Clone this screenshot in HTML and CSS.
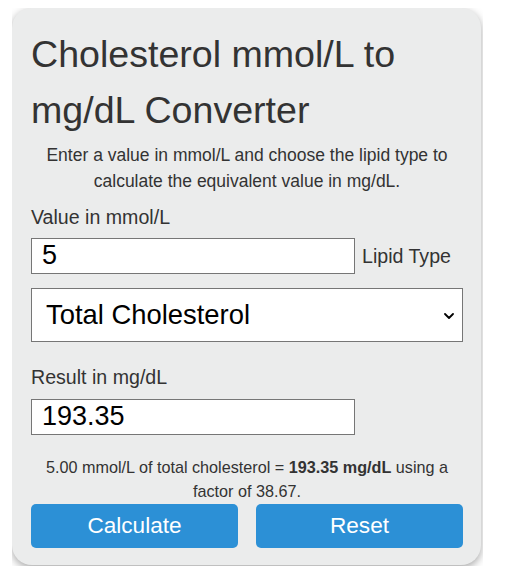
FILE: index.html
```html
<!DOCTYPE html>
<html lang="en">
<head>
<meta charset="utf-8">
<title>Cholesterol mmol/L to mg/dL Converter</title>
<link rel="stylesheet" href="styles.css">
</head>
<body>
<div class="frame">
  <div class="card">
    <h1 class="title">Cholesterol mmol/L to mg/dL Converter</h1>
    <p class="intro">Enter a value in mmol/L and choose the lipid type to calculate the equivalent value in mg/dL.</p>
    <label class="label" for="val">Value in mmol/L</label>
    <div class="row">
      <input class="field" id="val" type="text" value="5">
      <span class="side-label">Lipid Type</span>
    </div>
    <div class="select-wrap">
      <select class="select">
        <option>Total Cholesterol</option>
        <option>LDL Cholesterol</option>
        <option>HDL Cholesterol</option>
        <option>Triglycerides</option>
      </select>
      <svg class="chevron" width="10" height="6" viewBox="0 0 10 6"><path d="M1 1 L5 5 L9 1" fill="none" stroke="#000" stroke-width="1.8" stroke-linecap="round" stroke-linejoin="round"/></svg>
    </div>
    <label class="label result-label" for="res">Result in mg/dL</label>
    <input class="field" id="res" type="text" value="193.35">
    <p class="summary">5.00 mmol/L of total cholesterol = <strong>193.35 mg/dL</strong> using a factor of 38.67.</p>
    <div class="buttons">
      <button class="btn">Calculate</button>
      <button class="btn">Reset</button>
    </div>
  </div>
</div>
</body>
</html>
```

FILE: styles.css
```css
html, body {
  margin: 0;
  padding: 0;
  background: #ffffff;
}

body {
  font-family: "Liberation Sans", Arial, sans-serif;
  color: #333333;
}

.frame {
  margin: 8px 0 0 12px;
  width: 471px;
  height: 558px;
  overflow: hidden;
}

.card {
  width: 469px;
  height: 557px;
  box-sizing: border-box;
  background: #ebecec;
  border-radius: 20px;
  box-shadow: 0 3px 8px rgba(0, 0, 0, 0.35);
  padding: 19px 18px 0 19px;
  display: flex;
  flex-direction: column;
}

.title {
  margin: 0;
  font-size: 37.6px;
  font-weight: normal;
  line-height: 55.5px;
  color: #333333;
}

.intro {
  margin: 4px 0 0;
  font-size: 17.5px;
  line-height: 26.4px;
  text-align: center;
}

.label {
  display: block;
  font-size: 19.6px;
  line-height: 22px;
  margin-top: 11px;
}

.row {
  display: flex;
  align-items: center;
  gap: 7px;
  margin-top: 10px;
}

.field {
  display: block;
  width: 324px;
  height: 36px;
  box-sizing: border-box;
  border: 1px solid #767676;
  border-radius: 0;
  background: #ffffff;
  padding: 0 10px;
  font-family: "Liberation Sans", Arial, sans-serif;
  font-size: 27px;
  color: #000000;
  margin: 0;
}

.side-label {
  font-size: 19.6px;
  line-height: 22px;
}

.select-wrap {
  position: relative;
  margin-top: 14px;
}

.select {
  display: block;
  width: 432px;
  height: 54px;
  box-sizing: border-box;
  -webkit-appearance: none;
  appearance: none;
  border: 1px solid #767676;
  border-radius: 0;
  background: #ffffff;
  padding: 0 14px;
  font-family: "Liberation Sans", Arial, sans-serif;
  font-size: 27.4px;
  color: #000000;
  margin: 0;
}

.chevron {
  position: absolute;
  right: 9px;
  top: 25px;
  pointer-events: none;
}

.result-label {
  margin-top: 24px;
}

#res {
  margin-top: 11px;
}

.summary {
  margin: 20px 0 0;
  font-size: 16.2px;
  line-height: 24px;
  text-align: center;
}

.summary strong {
  font-weight: bold;
}

.buttons {
  display: grid;
  grid-template-columns: 1fr 1fr;
  gap: 18px;
  margin-top: 1px;
}

.btn {
  height: 44px;
  border: none;
  border-radius: 5px;
  background: #2c90d6;
  color: #ffffff;
  font-family: "Liberation Sans", Arial, sans-serif;
  font-size: 22.6px;
  padding: 0;
  cursor: pointer;
}
```
